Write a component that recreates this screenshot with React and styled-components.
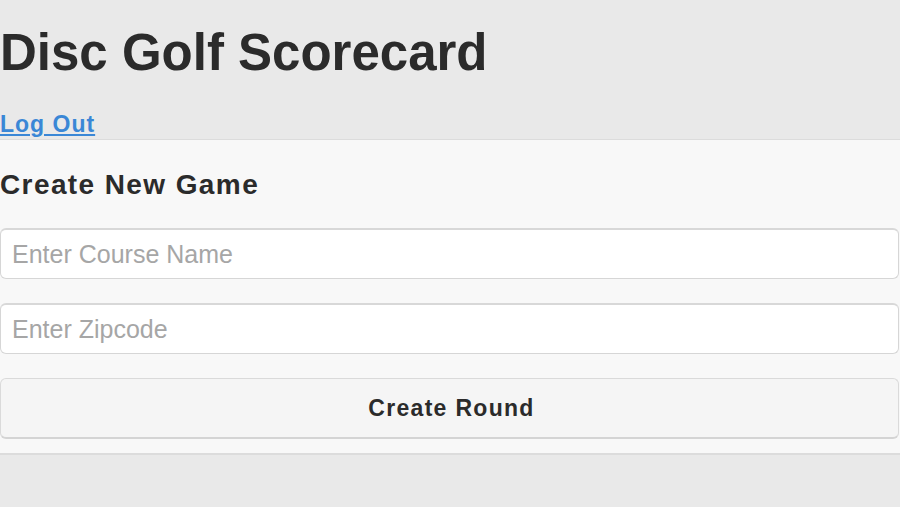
import React from 'react';
import styled, { createGlobalStyle } from 'styled-components';

const GlobalStyle = createGlobalStyle`
  html, body {
    margin: 0;
    padding: 0;
    background: #e9e9e9;
    font-family: 'Liberation Sans', Arial, sans-serif;
    color: #2b2b2b;
  }
`;

export default function App() {
  return (
    <>
      <GlobalStyle />
      <Page>
        <Header>
          <Title>Disc Golf Scorecard</Title>
          <LogOut href="#">Log Out</LogOut>
        </Header>
        <Panel>
          <PanelTitle>Create New Game</PanelTitle>
          <Form onSubmit={(e) => e.preventDefault()}>
            <Field placeholder="Enter Course Name" />
            <Field placeholder="Enter Zipcode" />
            <SubmitButton type="submit">Create Round</SubmitButton>
          </Form>
        </Panel>
      </Page>
    </>
  );
}

const Page = styled.div`
  display: flex;
  flex-direction: column;
  min-height: 507px;
`;

const Header = styled.header`
  display: flex;
  flex-direction: column;
  align-items: flex-start;
  padding-top: 25px;
`;

const Title = styled.h1`
  margin: 0;
  font-size: 51px;
  line-height: 56px;
  font-weight: bold;
  color: #2b2b2b;
`;

const LogOut = styled.a`
  margin: 31px 0 3px;
  font-size: 23px;
  line-height: 24px;
  font-weight: bold;
  letter-spacing: 1px;
  color: #3a87d6;
  text-decoration: underline;
`;

const Panel = styled.section`
  background: #f8f8f8;
  border-top: 1px solid #dcdcdc;
  border-bottom: 2px solid #dcdcdc;
  padding: 29px 1px 14px 0;
`;

const PanelTitle = styled.h2`
  margin: 0 0 27px;
  font-size: 28px;
  line-height: 32px;
  font-weight: bold;
  letter-spacing: 1.4px;
  color: #2b2b2b;
`;

const Form = styled.form`
  display: flex;
  flex-direction: column;
  gap: 24px;
`;

const Field = styled.input`
  box-sizing: border-box;
  height: 51px;
  width: 100%;
  padding: 0 11px;
  border: 1px solid #d6d6d6;
  border-top: 2px solid #d8d8d8;
  border-radius: 6px;
  background: #fff;
  font-family: 'Liberation Sans', Arial, sans-serif;
  font-size: 25px;
  color: #2b2b2b;
  outline: none;

  &::placeholder {
    color: #a6a6a6;
  }
`;

const SubmitButton = styled.button`
  box-sizing: border-box;
  height: 61px;
  width: 100%;
  padding: 0 0 0 4px;
  border: 1px solid #dadada;
  border-bottom: 2px solid #d4d4d4;
  border-radius: 6px;
  background: #f5f5f5;
  font-family: 'Liberation Sans', Arial, sans-serif;
  font-size: 23px;
  font-weight: bold;
  letter-spacing: 1.3px;
  color: #2b2b2b;
  cursor: pointer;
`;
